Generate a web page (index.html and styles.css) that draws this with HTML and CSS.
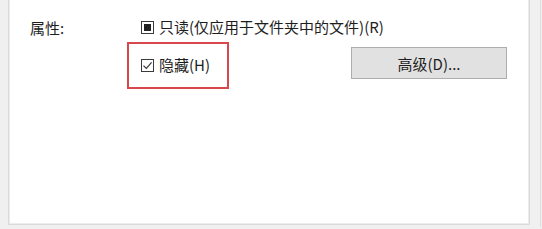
FILE: index.html
```html
<!DOCTYPE html>
<html lang="zh-CN">
<head>
    <meta charset="UTF-8">
    <meta name="viewport" content="width=device-width, initial-scale=1.0">
    <title>属性</title>
    <link rel="stylesheet" href="styles.css">
</head>
<body>
    <div class="frame">
        <div class="panel">
            <div class="row">
                <span class="label">属性:</span>
                <label class="check">
                    <span class="box filled"></span>
                    <span>只读(仅应用于文件夹中的文件)(R)</span>
                </label>
            </div>
            <div class="row second">
                <span class="label"></span>
                <div class="mark">
                    <label class="check">
                        <span class="box">
                            <svg width="11" height="11" viewBox="0 0 11 11">
                                <path d="M1.5 5.6 L4.3 8.4 L9.6 2.4" fill="none" stroke="#333" stroke-width="1.1"/>
                            </svg>
                        </span>
                        <span>隐藏(H)</span>
                    </label>
                </div>
                <button class="btn">高级(D)...</button>
            </div>
        </div>
        <div class="side"></div>
    </div>
</body>
</html>
```

FILE: styles.css
```css
body{
    margin: 0;
    padding: 0;
    background-color: #f0f0f0;
    font-family: "Noto Sans CJK SC", "Liberation Sans", sans-serif;
    font-size: 15px;
    color: #1e1e1e;
}
.frame{
    display: flex;
    height: 229px;
}
.panel{
    margin-left: 8px;
    width: 522px;
    height: 225px;
    box-sizing: border-box;
    background-color: #fff;
    border: 1px solid #dadada;
    border-top: none;
    box-shadow: inset 1px 0 0 #ececec, inset -1px -1px 0 #ececec;
    padding: 16px 22px 0 21px;
}
.side{
    width: 10px;
    border-right: 1px solid #dedede;
    height: 227px;
}
.row{
    display: flex;
    align-items: center;
    height: 22px;
}
.row.second{
    align-items: flex-start;
    height: auto;
    margin-top: 4px;
}
.label{
    width: 111px;
    flex-shrink: 0;
}
.check{
    display: flex;
    align-items: center;
    gap: 5px;
    line-height: 22px;
}
.box{
    width: 13px;
    height: 13px;
    box-sizing: border-box;
    border: 1px solid #3a3a3a;
    display: flex;
    align-items: center;
    justify-content: center;
    background-color: #fff;
}
.box.filled::after{
    content: "";
    width: 7px;
    height: 7px;
    background-color: #222;
}
.mark{
    margin-left: -14px;
    width: 86px;
    height: 33px;
    border: 2px solid #d8474d;
    padding: 10px 0 0 12px;
}
.btn{
    margin-left: auto;
    margin-top: 5px;
    width: 156px;
    height: 32px;
    background-color: #e1e1e1;
    border: 1px solid #adadad;
    font-family: inherit;
    font-size: 15px;
    color: #1e1e1e;
    padding: 0;
}
```
